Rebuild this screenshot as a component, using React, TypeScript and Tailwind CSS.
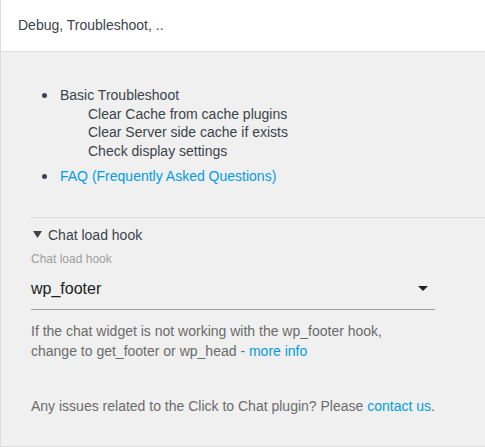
function Bullet() {
  return <span className="mt-[7px] h-[5px] w-[5px] shrink-0 rounded-full bg-[#3c434a]" />;
}

export default function App() {
  return (
    <div
      className="h-[447px] w-[485px] overflow-hidden bg-white text-[14px] text-[#3c434a]"
      style={{ fontFamily: '"Liberation Sans", Arial, sans-serif' }}
    >
      <div className="h-[447px] border-b border-l border-[#dddddd]">
        {/* header */}
        <div className="flex h-[52px] items-center border-b border-[#dddddd] bg-white pl-[17px]">
          <span className="text-[14px] text-[#3c434a]">Debug, Troubleshoot, ..</span>
        </div>

        {/* body */}
        <div className="h-[394px] bg-[#f0f0f0] pl-[30px] pt-[34px]">
          <ul className="ml-[11px] leading-[18.5px]">
            <li className="flex gap-[13px]">
              <Bullet />
              <div>
                Basic Troubleshoot
                <div className="pl-[28px]">
                  <div>Clear Cache from cache plugins</div>
                  <div>Clear Server side cache if exists</div>
                  <div>Check display settings</div>
                </div>
              </div>
            </li>
            <li className="mt-[7px] flex gap-[13px]">
              <Bullet />
              <a className="text-[#039be5]">FAQ (Frequently Asked Questions)</a>
            </li>
          </ul>

          <div className="mt-[31px] border-t border-[#dcdcdc]" />

          <div className="mt-[8px] flex items-center gap-[6px] leading-[18px]">
            <svg width="9" height="9" viewBox="0 0 10 10" className="ml-[2px]">
              <path d="M0 1 L10 1 L5 9 Z" fill="#3c434a" />
            </svg>
            <span>Chat load hook</span>
          </div>

          <div className="mt-[7px] text-[12px] leading-[16px] text-[#9e9e9e]">Chat load hook</div>

          <div className="relative flex h-[43px] w-[404px] items-center border-b border-[#9e9e9e] pt-[2px]">
            <span className="text-[16px] text-[#212121]">wp_footer</span>
            <svg width="10" height="6" viewBox="0 0 10 6" className="absolute right-[7px] top-[19px]">
              <path d="M0 0 L10 0 L5 5 Z" fill="#212121" />
            </svg>
          </div>

          <p className="mt-[11px] leading-[20px] text-[#6b6b6b]">
            If the chat widget is not working with the wp_footer hook,
            <br />
            change to get_footer or wp_head - <a className="text-[#039be5]">more info</a>
          </p>

          <p className="mt-[35px] text-[#6b6b6b]">
            Any issues related to the Click to Chat plugin? Please{" "}
            <a className="text-[#039be5]">contact us</a>.
          </p>
        </div>
      </div>
    </div>
  );
}
